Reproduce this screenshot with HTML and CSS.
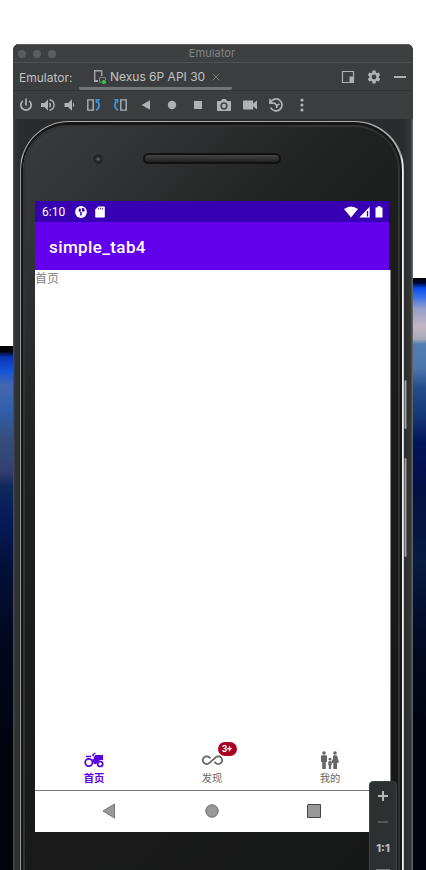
FILE: index.html
```
<!DOCTYPE html>
<html lang="zh">
<head>
<meta charset="utf-8">
<title>Emulator</title>
<link rel="stylesheet" href="styles.css">
</head>
<body>
<div class="desktop">
  <div class="wallpaper wallpaper-left"></div>
  <main class="window">
    <header class="titlebar"><i></i><i></i><i></i><span>Emulator</span></header>
    <div class="tabs">
      <span class="tabs-label">Emulator:</span>
      <div class="tab">
        <svg width="14" height="16" viewBox="0 0 14 16"><path d="M5 12.200H1.700V1.700h7V7" fill="none" stroke="#a4a8ab" stroke-width="1.400"/><path d="M1 11h4v2H1z" fill="#a4a8ab"/><path d="M6.500 12.500V8.500h6V11M6 13h3" fill="none" stroke="#7d8285"/><circle cx="11" cy="13" r="2" fill="#35d04b"/></svg>
        <span class="tab-name">Nexus 6P API 30</span>
        <svg class="close" width="8" height="8" viewBox="0 0 8 8"><path d="M.5.5l7 7m0-7l-7 7" stroke="#77797b"/></svg>
      </div>
      <div class="window-tools">
        <svg width="14" height="14" viewBox="0 0 14 14"><path d="M1.500 1.500h11v11h-11z" fill="none" stroke="#afb1b3" stroke-width="1.200"/><path d="M8.500 6.500H13V13H8.500z" fill="#afb1b3"/></svg>
        <svg width="16" height="16" viewBox="0 0 24 24"><path fill="#afb1b3" d="M19.140 12.940c.04-.3.06-.61.06-.94s-.02-.64-.07-.94l2.030-1.580a.49.490 0 0 0 .12-.61l-1.920-3.320a.49.490 0 0 0-.59-.22l-2.390.96a7 7 0 0 0-1.620-.94L14.400 2.810a.48.480 0 0 0-.48-.41h-3.840a.47.470 0 0 0-.47.410L9.250 5.350c-.59.240-1.130.57-1.620.94l-2.390-.96a.48.480 0 0 0-.59.220L2.740 8.870a.47.470 0 0 0 .12.610l2.030 1.580c-.05.3-.09.630-.09.940s.02.640.07.940l-2.030 1.580a.49.490 0 0 0-.12.610l1.920 3.320c.12.220.37.290.59.220l2.390-.96c.5.380 1.030.7 1.620.94l.36 2.540c.05.240.24.410.48.410h3.840c.24 0 .44-.17.470-.41l.36-2.540a7 7 0 0 0 1.620-.94l2.390.96c.22.080.47 0 .59-.22l1.920-3.320a.47.470 0 0 0-.12-.61zM12 15.600a3.600 3.600 0 1 1 0-7.200 3.600 3.600 0 0 1 0 7.200z"/></svg>
        <svg width="12" height="14" viewBox="0 0 12 14"><path d="M0 6h12v2H0z" fill="#afb1b3"/></svg>
      </div>
    </div>
    <nav class="toolbar">
      <span class="tool small"><svg width="14" height="14" viewBox="0 0 14 14"><path d="M7 .5v7M3.800 2.800a5.200 5.200 0 1 0 6.400 0" class="line thick"/></svg></span>
      <span class="tool small"><svg width="14" height="14" viewBox="0 0 14 14"><path d="M0 5h3.500L7 1.500v11L3.500 9H0z"/><path d="M8.500 5q1.800 2 0 4M8.500 1.700q4.600.8 4.600 5.300t-4.600 5.300" class="line"/></svg></span>
      <span class="tool small"><svg width="14" height="14" viewBox="0 0 14 14"><path d="M1.500 5H5l4-3.700v11.400L5 9H1.500z"/><path d="M10 4.500q2.700 2.500 0 5z"/></svg></span>
      <span class="tool"><svg width="16" height="14" viewBox="0 0 16 14"><path d="M1.800 1.900h5.400v10.200H1.800z" class="line"/><path d="M10 12.200q5-3.200 2-8.700" class="line blue"/><path d="M9.300 1h5.200L10 5.800z" class="head"/></svg></span>
      <span class="tool"><svg width="16" height="14" viewBox="0 0 16 14"><path d="M8.800 1.900h5.400v10.200H8.800z" class="line"/><path d="M6 12.200q-5-3.200-2-8.700" class="line blue"/><path d="M6.700 1H1.500L6 5.800z" class="head"/></svg></span>
      <span class="tool"><svg width="14" height="14" viewBox="0 0 14 14"><path d="M2.500 7L11 2.200v9.600z"/></svg></span>
      <span class="tool"><svg width="14" height="14" viewBox="0 0 14 14"><circle cx="7" cy="7" r="4.200"/></svg></span>
      <span class="tool"><svg width="14" height="14" viewBox="0 0 14 14"><path d="M3 3h8v8H3z"/></svg></span>
      <span class="tool"><svg width="14" height="14" viewBox="0 0 14 14"><path fill-rule="evenodd" d="M1 3h3l1.200-1.900h3.600L10 3h3q1 0 1 1v8q0 1-1 1H1q-1 0-1-1V4q0-1 1-1zm6 1.300a3.600 3.600 0 1 0 0 7.200 3.600 3.600 0 0 0 0-7.200z"/><circle cx="7" cy="7.900" r="2.200"/></svg></span>
      <span class="tool"><svg width="14" height="14" viewBox="0 0 14 14"><path d="M1 2.500h8.500q.7 0 .7.700v2.500L14 2.500v9l-3.800-3.200v2.500q0 .7-.7.700H.7q-.7 0-.7-.7V3.200q0-.7 1-.7z"/></svg></span>
      <span class="tool"><svg width="14" height="14" viewBox="0 0 14 14"><path d="M1.500 4.500A6 6 0 1 1 1.600 9.500M1 .8v4.400h4.500M5.500 5l2.200 2.500L10.500 6M7.700 7.500V10" class="line thick"/></svg></span>
      <span class="tool"><svg width="14" height="14" viewBox="0 0 14 14"><circle cx="7" cy="2" r="1.600"/><circle cx="7" cy="7" r="1.600"/><circle cx="7" cy="12" r="1.600"/></svg></span>
    </nav>
    <section class="stage">
      <div class="phone">
        <div class="glass">
          <div class="bezel"><span class="camera"></span><span class="speaker"></span></div>
          <div class="screen">
            <div class="status">
              <time>6:10</time>
              <svg width="12" height="12" viewBox="0 0 12 12"><circle cx="6" cy="6" r="5.900" fill="#fff"/><path d="M3.800 2.500h2v3.300h-2zM7 2h1.500q1.800 1 1 3.500H7zM5.200 6h1.500v3.500H5.200z" fill="#3700b3"/></svg>
              <svg width="10" height="12" viewBox="0 0 10 12"><path d="M3.300.5H9q.8 0 .8.800v9.500q0 .7-.8.700H1q-.8 0-.8-.7V3.600z" fill="#fff"/><path d="M3.500 1.800v1.700M5.500 1.800v1.700M7.500 1.800v1.700" stroke="#3700b3" stroke-width=".8"/></svg>
              <div class="signals">
                <svg width="14" height="12" viewBox="0 0 14 12"><path d="M0 3Q7-2 14 3L7 11.500z" fill="#fff"/></svg>
                <svg class="cell" width="11" height="12" viewBox="0 0 11 12"><path d="M.3 11.500L10.700.8v10.700z" fill="#fff"/><path d="M8.500 5v5.500" stroke="#3700b3" stroke-width="1.300"/></svg>
                <svg class="battery" width="8" height="12" viewBox="0 0 8 12"><path d="M.5 1.500h2V.3h3v1.200h2v10h-7z" fill="#fff"/></svg>
              </div>
            </div>
            <div class="appbar">simple_tab4</div>
            <div class="content">首页</div>
            <div class="bottom-nav">
              <div class="item active">
                <svg width="20" height="16" viewBox="0 0 20 16"><g fill="none" stroke="#5a00e0" stroke-width="1.700"><circle cx="4.800" cy="10.500" r="3.600"/><circle cx="16.200" cy="12" r="2.500"/></g><path fill="#5a00e0" d="M2 3.700h5v1.600H2zM7.500 2.900L11 .5l.8 1-2.200 1.600L11 5V3.100h8v5.200a5 5 0 0 0-6.500 3.700H9.700q0-3-2.200-4.700h2.300V4.500z"/></svg>
                <span>首页</span>
              </div>
              <div class="item">
                <div class="badge-wrap"><svg width="21" height="18" viewBox="0 0 24 20.600"><path transform="translate(0 -1.500)" fill="#666" d="M18.600 6.620c-1.440 0-2.800.56-3.770 1.530L12 10.660 10.480 12h.01L7.800 14.390c-.64.64-1.490.99-2.400.99-1.870 0-3.390-1.510-3.390-3.380S3.530 8.620 5.400 8.620c.91 0 1.760.35 2.440 1.030l1.130 1 1.510-1.340L9.220 8.200C8.200 7.180 6.840 6.620 5.400 6.620 2.420 6.620 0 9.040 0 12s2.420 5.380 5.400 5.380c1.440 0 2.800-.56 3.770-1.530l2.830-2.500.01.01L13.520 12h-.01l2.690-2.390c.64-.64 1.490-.99 2.400-.99 1.870 0 3.390 1.510 3.390 3.380s-1.520 3.380-3.390 3.380c-.9 0-1.760-.35-2.440-1.030l-1.140-1.010-1.510 1.340 1.270 1.120c1.020 1.010 2.370 1.570 3.820 1.570 2.980 0 5.400-2.410 5.400-5.380s-2.420-5.370-5.400-5.370z"/></svg><b class="badge">3+</b></div>
                <span>发现</span>
              </div>
              <div class="item">
                <svg width="20" height="18" viewBox="0 0 20 18"><g fill="#666"><circle cx="4" cy="2" r="1.800"/><path d="M2 4.300h4q1 0 1 1V11H5.800v7H2.200v-7H1V5.300q0-1 1-1z"/><circle cx="15" cy="2" r="1.800"/><path d="M14 4.300h2q1 0 1.300 1L19 11.700h-2V18h-3.700v-6h-1.500V9.500l1.200-1.300V5.300q0-1 1-1z"/><circle cx="10" cy="8.200" r="1.400"/><path d="M8.300 10.200h3.400v4h-.6V18H8.900v-3.800h-.6z"/></g></svg>
                <span>我的</span>
              </div>
            </div>
            <div class="system-nav">
              <svg width="14" height="16" viewBox="0 0 14 16"><path d="M1 8L12.500 1v14z" fill="#999" stroke="#777"/></svg>
              <svg width="14" height="16" viewBox="0 0 14 16"><circle cx="7" cy="8" r="6.200" fill="#999" stroke="#666"/></svg>
              <svg width="14" height="16" viewBox="0 0 14 16"><path d="M1 1.500h12.500v13H.5V2z" fill="#999" stroke="#444"/></svg>
            </div>
          </div>
        </div>
      </div>
      <i class="side-key power"></i><i class="side-key volume"></i>
      <div class="zoom-panel">
        <svg width="12" height="12" viewBox="0 0 12 12"><path d="M6 1v10M1 6h10" stroke="#b7b9ba" stroke-width="2"/></svg>
        <svg width="12" height="12" viewBox="0 0 12 12"><path d="M1 6h10" stroke="#636667" stroke-width="1.500"/></svg>
        <span>1:1</span>
        <svg width="14" height="12" viewBox="0 0 14 12"><path d="M.7.700h12.600V12H.7z" fill="none" stroke="#777a7b" stroke-width="1.400"/></svg>
      </div>
    </section>
  </main>
  <div class="wallpaper wallpaper-right"></div>
</div>
</body>
</html>
```
FILE: styles.css
```
* { box-sizing: border-box; }
body { margin: 0; background: #fff; font-family: Inter, "Noto Sans CJK SC", sans-serif; }
svg { display: block; flex: none; }
.desktop { width: 426px; height: 870px; display: grid; grid-template-columns: 13px 400px 13px; overflow: hidden; }
.wallpaper-left { margin-top: 346px; background: linear-gradient(#000 0, #000 5px, #0834b8 11px, #1554d8 25px, #4468b0 40px, #315eaa 65px, #345080 90px, #343f70 125px, #10285c 140px, #061a58 175px, #031039 220px, #020820 290px, #01030d 400px); }
.wallpaper-right { margin-top: 278px; background: linear-gradient(#000 0, #000739 5px, #094bea 10px, #3d73e9 20px, #929dcb 30px, #c4b5c2 48px, #a9a9b9 61px, #507eaf 66px, #4d77ac 90px, #234c8b 110px, #153b78 135px, #03145a 165px, #021044 210px, #061c40 285px, #030b28 350px, #01030d 450px); }
.window { margin-top: 44px; height: 826px; background: #2c2e2f; border-radius: 6px 6px 0 0; overflow: hidden; }
.titlebar { height: 19px; background: #3d3f41; border-top: 1px solid #57595a; border-bottom: 1px solid #505253; display: flex; align-items: center; gap: 7px; padding-left: 5px; position: relative; color: #828485; font-size: 11px; letter-spacing: .1px; }
.titlebar i { width: 8px; height: 8px; border-radius: 50%; background: #5a5c5e; }
.titlebar span { position: absolute; left: 0; right: 2px; top: 1px; line-height: 14px; text-align: center; }
.tabs { height: 28px; background: #3b3d3f; border-bottom: 1px solid #303234; display: flex; align-items: stretch; color: #c1c3c4; font-size: 12px; }
.tabs-label { width: 66px; padding-left: 6px; line-height: 29px; white-space: nowrap; }
.tab { width: 153px; border-bottom: 3px solid #737678; border-radius: 0 0 2px 2px; display: flex; align-items: center; padding: 3px 0 0 14px; }
.tab-name { width: 102px; margin-left: 3px; white-space: nowrap; }
.window-tools { margin-left: auto; padding: 1px 7px 0 0; display: flex; align-items: center; gap: 12px; }
.window-tools svg:first-child { margin-right: -1px; }
.toolbar { height: 28px; background: #3b3d3f; padding-left: 2px; display: flex; align-items: center; }
.tool { width: 26px; display: flex; justify-content: center; fill: #b0b2b4; }
.tool.small { width: 22px; }
.line { fill: none; stroke: #b0b2b4; stroke-width: 1.400; }
.thick { stroke-width: 1.700; }
.line.blue { stroke: #3b8ed0; stroke-width: 2; }
.head { fill: #3b8ed0; }
.stage { height: 751px; position: relative; padding: 2px 9px 0 7px; background: linear-gradient(90deg, #505354 0, #303334 2px, #292b2c 8px, #292b2c 390px, #353838 398px, #606363 399px); }
.phone { height: 780px; border-radius: 49px 49px 0 0; padding: 1px 2px 0 1px; background: linear-gradient(90deg, #777 0, #eee 2px, #aaa 3px, #aaa 381px, #fff 382px, #bbb 384px); }
.glass { height: 779px; border: 2px solid #161616; border-top-width: 3px; border-radius: 48px 48px 0 0; padding: 0 9px 0 12px; background: linear-gradient(135deg, #393b3c 0, #333435 10%, #202121 30%, #1b1b1b 50%, #171818 100%); box-shadow: inset 0 0 0 2px #303233, inset 1px 0 #ccc; }
.bezel { height: 76px; position: relative; }
.camera { position: absolute; left: 56px; top: 27px; width: 13px; height: 13px; border-radius: 50%; background: radial-gradient(circle at 55% 55%, #777 0, #303136 2px, #202125 4px, #393a3c 6px); }
.speaker { position: absolute; left: 108px; top: 28px; width: 138px; height: 11px; border: 2px solid #111; border-radius: 6px; background: linear-gradient(#444, #202020); }
.screen { width: 354px; height: 631px; background: #fff; display: flex; flex-direction: column; }
.content, .bottom-nav { box-shadow: 1px 0 #fff, 2px 0 #888; }
.status { height: 21px; flex: none; background: #3700b3; color: #fff; display: flex; align-items: center; gap: 10px; padding: 0 6px 0 7px; }
.status time { width: 23px; font: 12px Roboto, sans-serif; white-space: nowrap; }
.status time + svg + svg { margin-left: -2px; }
.signals { margin-left: auto; display: flex; align-items: center; }
.cell { margin-left: 1px; }
.battery { margin-left: 5px; }
.appbar { height: 48px; flex: none; background: #6200ee; color: #fff; font: 500 17px/50px Roboto, sans-serif; padding-left: 14px; letter-spacing: .4px; }
.content { flex: 1; color: #808080; font: 12px/16px "Noto Sans CJK SC", sans-serif; }
.bottom-nav { height: 47px; flex: none; display: grid; grid-template-columns: repeat(3, 1fr); }
.item { display: flex; flex-direction: column; align-items: center; justify-content: flex-end; color: #666; font: 10.300px/14px "Noto Sans CJK SC", sans-serif; padding-bottom: 5px; gap: 2px; }
.item svg { height: 18px; }
.item.active { color: #5a00e0; font-weight: 700; }
.badge-wrap { position: relative; }
.badge { position: absolute; left: 16px; top: -9px; width: 19px; height: 14px; border-radius: 7px; background: #a80020; color: #fff; font: 700 9px/14px Roboto, sans-serif; text-align: center; }
.system-nav { height: 42px; flex: none; border-top: 1px solid #777; display: flex; justify-content: space-between; align-items: center; padding: 0 68px 1px 67px; }
.side-key { position: absolute; right: 6px; width: 3px; border-radius: 2px; background: linear-gradient(90deg, #444, #a0a2a2 50%, #444); }
.power { top: 261px; height: 49px; }
.volume { top: 339px; height: 99px; }
.zoom-panel { position: absolute; left: 356px; top: 662px; width: 28px; height: 95px; background: #2d3031; border: 1px solid #3d4041; border-radius: 4px 4px 0 0; display: flex; flex-direction: column; align-items: center; padding-top: 8px; gap: 14px; color: #b7b9ba; font: 800 11px/12px Inter, sans-serif; }
.zoom-panel svg:last-child { margin-top: 1px; }
```
